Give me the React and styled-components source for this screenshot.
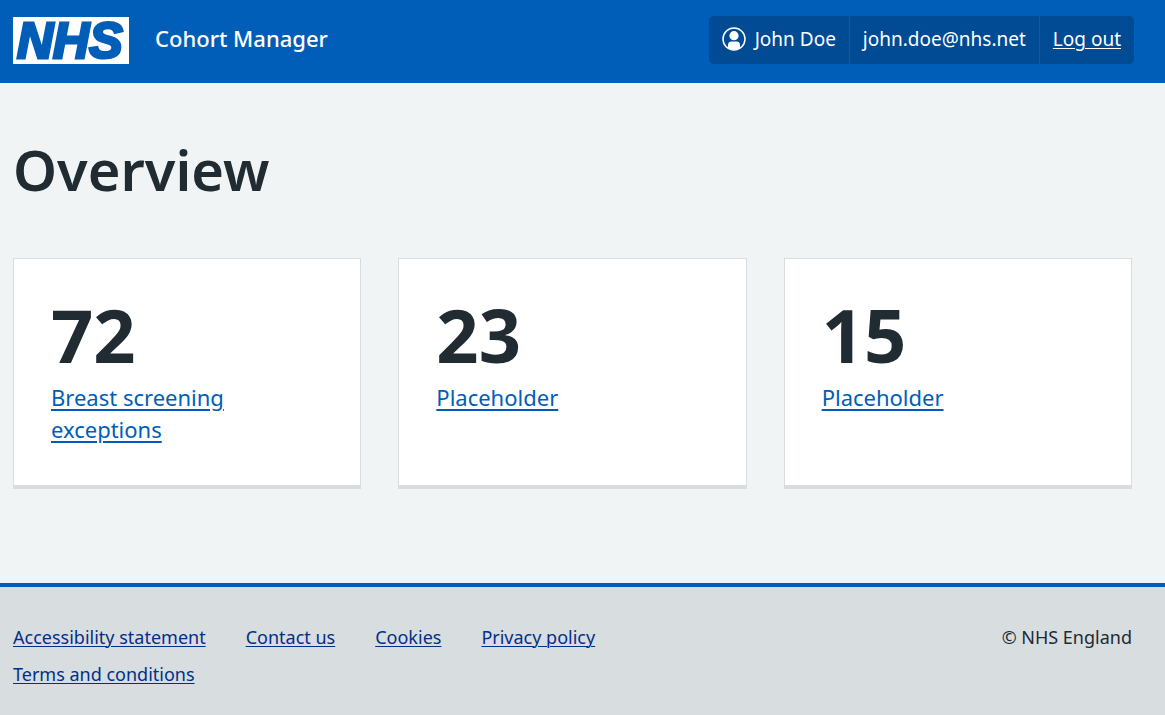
import React from 'react';
import styled, { createGlobalStyle } from 'styled-components';

const GlobalStyle = createGlobalStyle`
  *, *::before, *::after { box-sizing: border-box; }
  html { background: #d8dde0; }
  body {
    margin: 0;
    background: #f0f4f5;
    color: #212b32;
    font-family: "Noto Sans", "Open Sans", Arial, sans-serif;
    font-size: 18px;
    line-height: 28px;
  }
  #root { min-height: 100vh; display: flex; flex-direction: column; }
`;

const Header = styled.header`
  display: flex;
  flex-wrap: wrap;
  align-items: center;
  justify-content: space-between;
  gap: 16px;
  min-height: 83px;
  padding: 16px 31px 19px 13px;
  background: #005eb8;
  color: #fff;
`;

const Brand = styled.a`
  display: flex;
  align-items: center;
  gap: 26px;
  color: #fff;
  font-size: 22px;
  line-height: 32px;
  text-decoration: none;
`;

const ServiceName = styled.span`
  padding-bottom: 4px;
  font-weight: 500;
`;

const Logo = styled.svg`
  display: block;
  width: 116px;
  height: 47px;
  overflow: visible;
`;

const Account = styled.ul`
  display: flex;
  margin: 0;
  padding: 0;
  list-style: none;
  background: #004b93;
  border-radius: 5px;
  font-size: 19px;
`;

const AccountItem = styled.li`
  display: flex;
  align-items: center;
  gap: 9px;
  min-height: 48px;
  padding: 0 13px 2px;

  & + & { border-left: 1px solid #005eb8; }
`;

const AccountLink = styled.a`
  color: #fff;
  text-underline-offset: 2px;
  text-decoration-thickness: 1px;
`;

const Main = styled.main`
  flex: 1 0 auto;
  padding: 55px 33px 94px 13px;
`;

const Title = styled.h1`
  margin: 0 0 57px;
  font-size: 56px;
  line-height: 63px;
  font-weight: 600;
`;

const Cards = styled.ul`
  display: grid;
  grid-template-columns: repeat(3, minmax(0, 1fr));
  gap: 37px;
  margin: 0;
  padding: 0;
  list-style: none;
`;

const Card = styled.li`
  min-height: 231px;
  padding: 37px;
  background: #fff;
  border: 1px solid #d8dde0;
  border-bottom-width: 4px;
`;

const Count = styled.p`
  margin: 0 0 8px;
  font-size: 74px;
  line-height: 77px;
  font-weight: 700;
`;

const CardLink = styled.a`
  display: inline-block;
  max-width: 200px;
  color: #005eb8;
  font-size: 22px;
  line-height: 32px;
  text-underline-offset: 3px;
  text-decoration-thickness: 2px;
`;

const Footer = styled.footer`
  display: flex;
  align-items: flex-start;
  justify-content: space-between;
  gap: 40px;
  min-height: 132px;
  padding: 36px 33px 28px 13px;
  background: #d8dde0;
  border-top: 4px solid #005eb8;
`;

const FooterLinks = styled.ul`
  display: flex;
  flex-wrap: wrap;
  gap: 9px 40px;
  max-width: 740px;
  margin: 0;
  padding: 0;
  list-style: none;
`;

const FooterLink = styled.a`
  color: #003087;
  text-underline-offset: 2px;
  text-decoration-thickness: 1px;
`;

const Copyright = styled.p`
  margin: 0;
  white-space: nowrap;
`;

const cards = [
  { count: 72, label: 'Breast screening exceptions' },
  { count: 23, label: 'Placeholder' },
  { count: 15, label: 'Placeholder' },
];

const footerLinks = [
  'Accessibility statement',
  'Contact us',
  'Cookies',
  'Privacy policy',
  'Terms and conditions',
];

function NhsLogo() {
  return (
    <Logo viewBox="0 0 116 47" role="img" aria-label="NHS">
      <rect width="116" height="47" fill="#fff" />
      <text
        x="4"
        y="41"
        fill="#005eb8"
        stroke="#005eb8"
        strokeWidth="3"
        fontFamily="Liberation Sans, Arial, sans-serif"
        fontSize="50"
        fontWeight="700"
        fontStyle="italic"
      >
        NHS
      </text>
    </Logo>
  );
}

function UserIcon() {
  return (
    <svg width="24" height="24" viewBox="0 0 24 24" fill="#fff" aria-hidden="true">
      <circle cx="12" cy="12" r="11" fill="none" stroke="#fff" strokeWidth="1.5" />
      <circle cx="12" cy="8.7" r="4.6" />
      <path d="M6 20.8v-2.6a3.6 3.6 0 0 1 3.6-3.6h4.8a3.6 3.6 0 0 1 3.6 3.6v2.6a11 11 0 0 1-12 0z" />
    </svg>
  );
}

export default function App() {
  return (
    <>
      <GlobalStyle />
      <Header>
        <Brand href="#">
          <NhsLogo />
          <ServiceName>Cohort Manager</ServiceName>
        </Brand>
        <nav aria-label="Account">
          <Account>
            <AccountItem>
              <UserIcon />
              <span>John Doe</span>
            </AccountItem>
            <AccountItem>john.doe@nhs.net</AccountItem>
            <AccountItem>
              <AccountLink href="#">Log out</AccountLink>
            </AccountItem>
          </Account>
        </nav>
      </Header>
      <Main>
        <Title>Overview</Title>
        <Cards>
          {cards.map((card, i) => (
            <Card key={i}>
              <Count>{card.count}</Count>
              <CardLink href="#">{card.label}</CardLink>
            </Card>
          ))}
        </Cards>
      </Main>
      <Footer>
        <FooterLinks>
          {footerLinks.map((label) => (
            <li key={label}>
              <FooterLink href="#">{label}</FooterLink>
            </li>
          ))}
        </FooterLinks>
        <Copyright>© NHS England</Copyright>
      </Footer>
    </>
  );
}
